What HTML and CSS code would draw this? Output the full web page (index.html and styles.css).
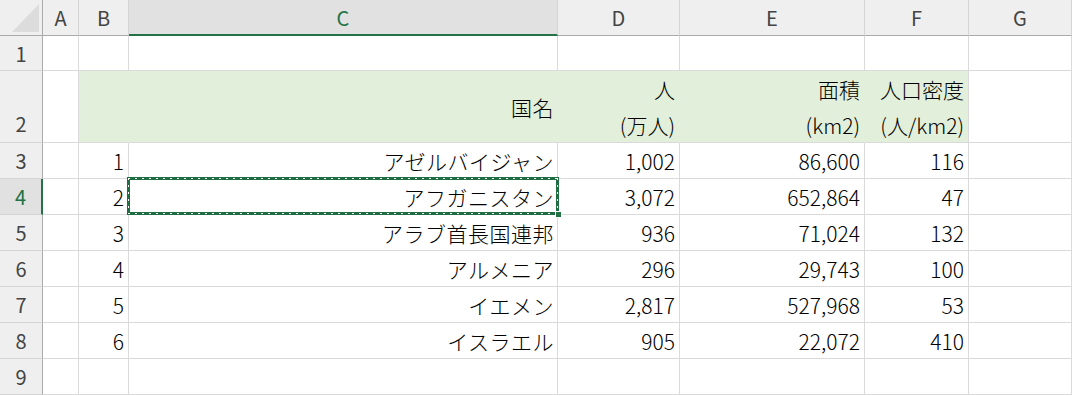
FILE: index.html
```html
<!DOCTYPE html>
<html lang="ja">
<head>
    <meta charset="UTF-8">
    <title>Sheet1</title>
    <link rel="stylesheet" href="styles.css">
</head>
<body>
    <div class="sheet">
        <!-- column headers -->
        <div class="corner"><span class="tri"></span></div>
        <div class="colhead">A</div>
        <div class="colhead">B</div>
        <div class="colhead active">C</div>
        <div class="colhead">D</div>
        <div class="colhead">E</div>
        <div class="colhead">F</div>
        <div class="colhead last">G</div>

        <!-- row 1 -->
        <div class="rowhead">1</div>
        <div class="cell"></div><div class="cell"></div><div class="cell"></div>
        <div class="cell"></div><div class="cell"></div><div class="cell"></div><div class="cell"></div>

        <!-- row 2 : table header -->
        <div class="rowhead tall">2</div>
        <div class="cell"></div>
        <div class="cell head"></div>
        <div class="cell head jp">国名</div>
        <div class="cell head two">人<br>(万人)</div>
        <div class="cell head two">面積<br>(km2)</div>
        <div class="cell head two end">人口密度<br>(人/km2)</div>
        <div class="cell"></div>

        <!-- row 3 -->
        <div class="rowhead">3</div>
        <div class="cell"></div>
        <div class="cell">1</div>
        <div class="cell jp">アゼルバイジャン</div>
        <div class="cell">1,002</div>
        <div class="cell">86,600</div>
        <div class="cell">116</div>
        <div class="cell"></div>

        <!-- row 4 -->
        <div class="rowhead active">4</div>
        <div class="cell"></div>
        <div class="cell">2</div>
        <div class="cell jp copied">アフガニスタン<span class="ants"></span><span class="handle"></span></div>
        <div class="cell">3,072</div>
        <div class="cell">652,864</div>
        <div class="cell">47</div>
        <div class="cell"></div>

        <!-- row 5 -->
        <div class="rowhead">5</div>
        <div class="cell"></div>
        <div class="cell">3</div>
        <div class="cell jp">アラブ首長国連邦</div>
        <div class="cell">936</div>
        <div class="cell">71,024</div>
        <div class="cell">132</div>
        <div class="cell"></div>

        <!-- row 6 -->
        <div class="rowhead">6</div>
        <div class="cell"></div>
        <div class="cell">4</div>
        <div class="cell jp">アルメニア</div>
        <div class="cell">296</div>
        <div class="cell">29,743</div>
        <div class="cell">100</div>
        <div class="cell"></div>

        <!-- row 7 -->
        <div class="rowhead">7</div>
        <div class="cell"></div>
        <div class="cell">5</div>
        <div class="cell jp">イエメン</div>
        <div class="cell">2,817</div>
        <div class="cell">527,968</div>
        <div class="cell">53</div>
        <div class="cell"></div>

        <!-- row 8 -->
        <div class="rowhead">8</div>
        <div class="cell"></div>
        <div class="cell">6</div>
        <div class="cell jp">イスラエル</div>
        <div class="cell">905</div>
        <div class="cell">22,072</div>
        <div class="cell">410</div>
        <div class="cell"></div>

        <!-- row 9 -->
        <div class="rowhead">9</div>
        <div class="cell"></div><div class="cell"></div><div class="cell"></div>
        <div class="cell"></div><div class="cell"></div><div class="cell"></div><div class="cell"></div>
    </div>
</body>
</html>
```

FILE: styles.css
```css
body {
    margin: 0;
    background: #fff;
    font-family: "Noto Sans CJK JP", "Noto Sans", sans-serif;
    overflow: hidden;
}
.sheet {
    display: grid;
    grid-template-columns: 43px 36px 50px 429px 122px 185px 104px 103px;
    grid-template-rows: 36px 35px 72px repeat(7, 36px);
    width: 1072px;
}
.sheet > div {
    box-sizing: border-box;
}
.corner {
    position: relative;
    background: #efefef;
    border-right: 1px solid #ababab;
    border-bottom: 1px solid #ababab;
}
.tri {
    position: absolute;
    left: 12px;
    top: 4px;
    width: 27px;
    height: 28px;
    background: #dcdcdc;
    clip-path: polygon(100% 0, 100% 100%, 0 100%);
}
.colhead {
    display: flex;
    align-items: center;
    justify-content: center;
    background: #efefef;
    color: #444;
    font-size: 20px;
    border-right: 1px solid #d4d4d4;
    border-bottom: 1px solid #ababab;
}
.colhead.active {
    background: #e1e1e1;
    color: #217346;
    border-bottom: 2px solid #217346;
}
.rowhead {
    display: flex;
    align-items: center;
    justify-content: center;
    background: #efefef;
    color: #444;
    font-size: 20px;
    border-right: 1px solid #ababab;
    border-bottom: 1px solid #d4d4d4;
}
.rowhead.tall {
    align-items: flex-end;
    padding-bottom: 4px;
}
.rowhead.active {
    background: #e1e1e1;
    color: #217346;
    border-right: 2px solid #217346;
}
.cell {
    display: flex;
    align-items: center;
    justify-content: flex-end;
    padding-right: 4px;
    font-size: 21px;
    font-weight: 300;
    color: #000;
    border-right: 1px solid #dadada;
    border-bottom: 1px solid #dadada;
    white-space: nowrap;
}
.cell.jp {
    letter-spacing: 0.5px;
    padding-right: 3px;
}
.cell.head {
    background: #e2efda;
    border-right-color: #e2efda;
}
.cell.head.end {
    border-right-color: #dadada;
}
.cell.two {
    text-align: right;
    line-height: 36px;
}
.copied {
    position: relative;
}
/* copy marquee: green frame with white dashes running through its middle */
.ants {
    position: absolute;
    left: -2px;
    top: -2px;
    right: -2px;
    bottom: -1px;
    border: 3px solid #1e6e42;
}
.ants::before {
    content: "";
    position: absolute;
    left: -2px;
    top: -2px;
    right: -2px;
    bottom: -2px;
    background:
        repeating-linear-gradient(90deg, #fff 0 2px, transparent 2px 7px) top / 100% 1px no-repeat,
        repeating-linear-gradient(90deg, #fff 0 2px, transparent 2px 7px) bottom / 100% 1px no-repeat,
        repeating-linear-gradient(180deg, #fff 0 2px, transparent 2px 7px) left / 1px 100% no-repeat,
        repeating-linear-gradient(180deg, #fff 0 2px, transparent 2px 7px) right / 1px 100% no-repeat;
}
.handle {
    position: absolute;
    right: -5px;
    bottom: -4px;
    width: 5px;
    height: 5px;
    background: #217346;
    border: 1px solid #fff;
}
```
